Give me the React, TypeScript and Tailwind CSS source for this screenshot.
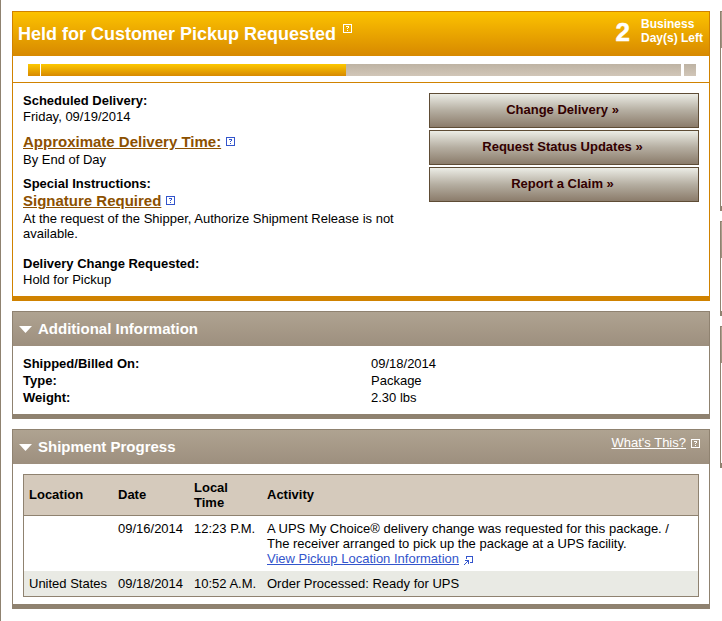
import React from "react";

type Props = { children?: React.ReactNode };

function HelpIcon({ className }: { className: string }) {
  return (
    <svg className={`shrink-0 ${className}`} width="9" height="9" viewBox="0 0 9 9" fill="currentColor" shapeRendering="crispEdges">
      <path d="M0 0h9v9H0zM1 1v7h7V1z" fillRule="evenodd" />
      <path d="M3 2h3v1H3zM5 3h1v1H5zM4 4h1v1H4zM4 6h1v1H4z" />
    </svg>
  );
}

function PopupIcon() {
  return (
    <svg className="ml-[5px] inline-block align-[-2px] text-[#3355cc]" width="9" height="9" viewBox="0 0 9 9" fill="currentColor" shapeRendering="crispEdges">
      <path d="M2 0h7v1H2zM8 1h1v6H8zM6 6h2v1H6zM2 1h1v2H2z" />
      <path d="M1 4h4v1H1zM4 5h1v3H4zM3 5h1v1H3zM2 6h1v1H2zM1 7h1v1H1zM0 8h1v1H0z" />
    </svg>
  );
}

function ActionButton({ children }: Props) {
  return (
    <button className="h-[35px] w-full border border-[#5e4c35] bg-linear-to-b from-[#ecede6] via-[#b5aea1] via-50% to-[#8b7c6b] pr-[3px] pb-0.5 text-center font-bold text-[#330000]">
      {children}
    </button>
  );
}

function SectionHeader({ title, children }: Props & { title: string }) {
  return (
    <div className="flex h-[34px] items-center bg-linear-to-b from-[#afa391] to-[#9d8f7e] pr-[9px] pl-1.5 text-white">
      <svg className="mr-1.5" width="13" height="7" viewBox="0 0 13 7" fill="currentColor">
        <path d="M0 0h13L6.5 7z" />
      </svg>
      <h2 className="pb-0.5 text-[15px] font-bold">{title}</h2>
      {children}
    </div>
  );
}

function SidePanel({ className }: { className: string }) {
  return (
    <div className={`border border-b-[5px] border-[#8f8270] bg-white ${className}`}>
      <div className="h-9 bg-linear-to-b from-[#afa391] to-[#9d8f7e]" />
    </div>
  );
}

const details = [
  { label: "Shipped/Billed On:", value: "09/18/2014" },
  { label: "Type:", value: "Package" },
  { label: "Weight:", value: "2.30 lbs" },
];

export default function App() {
  return (
    <div className="flex h-[621px] w-[722px] overflow-hidden border-l border-[#8f8270] bg-white pt-[11px] pl-[11px] font-['Liberation_Sans',Arial,sans-serif] text-[13px] leading-[15px] text-black">
      <main className="flex w-[698px] shrink-0 flex-col gap-2.5">
        <section className="h-[290px] border border-b-[5px] border-[#d08200]">
          <div className="flex h-11 bg-linear-to-b from-[#fcc200] to-[#d78900] pr-[6px] pl-[5px] font-bold text-white">
            <h1 className="text-lg leading-[44px]">Held for Customer Pickup Requested</h1>
            <HelpIcon className="mt-3 ml-[7px]" />
            <span className="ml-auto text-[26px] leading-[40px] [-webkit-text-stroke:0.5px_white]">2</span>
            <div className="ml-[11px] pt-[5px] text-xs leading-[14px]">
              Business
              <br />
              Day(s) Left
            </div>
          </div>

          <div className="flex h-[27px] border-b border-[#d08200] pt-2 pl-[15px]">
            <div className="h-3 w-3 bg-linear-to-b from-[#fcc800] to-[#d78900]" />
            <div className="ml-px h-3 w-[305px] bg-linear-to-b from-[#fcc800] to-[#d78900]" />
            <div className="h-3 w-[335px] bg-linear-to-b from-[#beb3a3] to-[#d1c6b8]" />
            <div className="ml-[3px] h-3 w-3 bg-linear-to-b from-[#beb3a3] to-[#d1c6b8]" />
          </div>

          <div className="flex justify-between px-2.5 pt-2.5">
            <div className="w-[390px]">
              <p className="leading-4 font-bold">Scheduled Delivery:</p>
              <p className="leading-4">Friday, 09/19/2014</p>
              <div className="mt-[7px] flex h-5 items-center">
                <a className="text-[15px] leading-5 font-bold text-[#8c5000] underline">Approximate Delivery Time:</a>
                <HelpIcon className="mb-px ml-[5px] text-[#3355cc]" />
              </div>
              <p>By End of Day</p>
              <p className="mt-[9px] font-bold">Special Instructions:</p>
              <div className="flex h-5 items-center">
                <a className="text-[15px] leading-5 font-bold text-[#8c5000] underline">Signature Required</a>
                <HelpIcon className="mb-px ml-[5px] text-[#3355cc]" />
              </div>
              <p>At the request of the Shipper, Authorize Shipment Release is not available.</p>
              <p className="mt-[15px] font-bold">Delivery Change Requested:</p>
              <p className="mt-px">Hold for Pickup</p>
            </div>
            <div className="flex w-[270px] flex-col gap-0.5">
              <ActionButton>Change Delivery »</ActionButton>
              <ActionButton>Request Status Updates »</ActionButton>
              <ActionButton>Report a Claim »</ActionButton>
            </div>
          </div>
        </section>

        <section className="h-[108px] border border-b-[5px] border-[#8f8270]">
          <SectionHeader title="Additional Information" />
          <dl className="px-2.5 pt-[9px] leading-[17px]">
            {details.map((item) => (
              <div key={item.label} className="flex">
                <dt className="w-[348px] font-bold">{item.label}</dt>
                <dd>{item.value}</dd>
              </div>
            ))}
          </dl>
        </section>

        <section className="h-[180px] border border-b-[5px] border-[#8f8270]">
          <SectionHeader title="Shipment Progress">
            <a className="mb-2.5 ml-auto underline">What's This?</a>
            <HelpIcon className="mb-[7px] ml-[5px]" />
          </SectionHeader>
          <div className="m-2.5 border border-[#8f8270]">
            <div className="grid h-[41px] grid-cols-[89px_76px_73px_1fr] items-center border-b border-[#8f8270] bg-[#d5cabc] pl-[5px] font-bold">
              <span className="pb-0.5">Location</span>
              <span className="pb-0.5">Date</span>
              <span className="w-10">Local Time</span>
              <span className="pb-0.5">Activity</span>
            </div>
            <div className="grid grid-cols-[89px_76px_73px_1fr] py-[5px] pl-[5px]">
              <span />
              <span>09/16/2014</span>
              <span className="whitespace-nowrap">12:23 P.M.</span>
              <div className="whitespace-nowrap">
                A UPS My Choice® delivery change was requested for this package. /
                <br />
                The receiver arranged to pick up the package at a UPS facility.
                <br />
                <a className="text-[#3355cc] underline">View Pickup Location Information</a>
                <PopupIcon />
              </div>
            </div>
            <div className="grid grid-cols-[89px_76px_73px_1fr] bg-[#e9eae4] py-[5px] pl-[5px]">
              <span>United States</span>
              <span>09/18/2014</span>
              <span className="whitespace-nowrap">10:52 A.M.</span>
              <span>Order Processed: Ready for UPS</span>
            </div>
          </div>
        </section>
      </main>

      <aside className="ml-2.5 flex w-[200px] shrink-0 flex-col gap-2.5">
        <SidePanel className="h-[200px]" />
        <SidePanel className="h-[95px]" />
        <SidePanel className="h-[142px]" />
      </aside>
    </div>
  );
}
